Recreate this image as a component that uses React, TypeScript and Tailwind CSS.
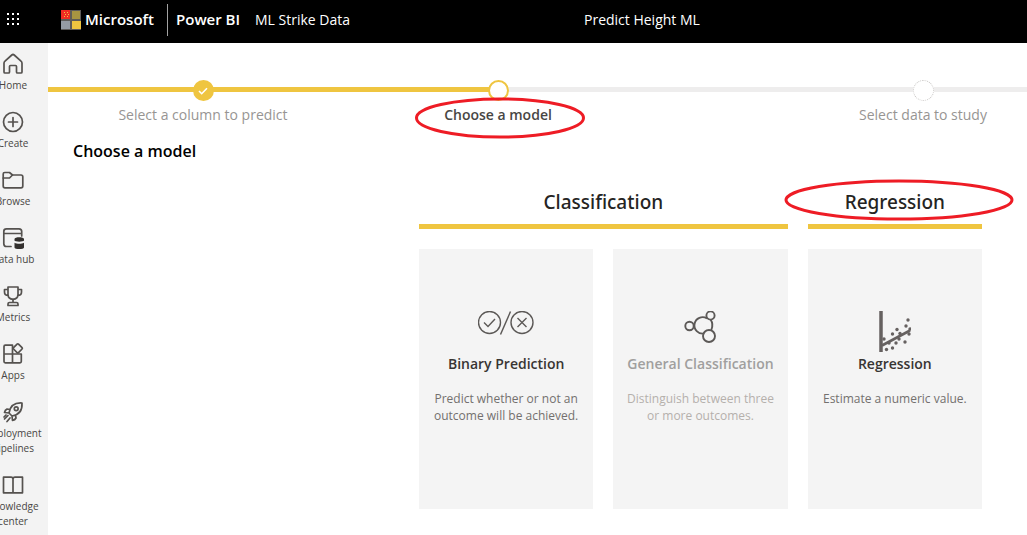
import type { ReactNode } from "react";

const stroke = { fill: "none", stroke: "#55524f", strokeWidth: 1.7, strokeLinejoin: "round", strokeLinecap: "round" } as const;

function NavIcon({ children }: { children: ReactNode }) {
  return (
    <svg viewBox="0 0 24 24" className="size-6 shrink-0" aria-hidden="true" {...stroke}>
      {children}
    </svg>
  );
}

const navItems: { label: string; icon: ReactNode }[] = [
  {
    label: "Home",
    icon: <path d="M3 11.2Q3 10 4 9.2L10.8 3Q12 2 13.2 3L20 9.2Q21 10 21 11.2V20Q21 21 20 21H16.5Q15.5 21 15.5 20V14.5Q15.5 13.5 14.5 13.5H9.500Q8.500 13.500 8.500 14.500V20Q8.500 21 7.500 21H4Q3 21 3 20Z" />,
  },
  {
    label: "Create",
    icon: (
      <>
        <circle cx="12" cy="12" r="9.500" />
        <path d="M12 7.500V16.500M7.500 12H16.500" />
      </>
    ),
  },
  {
    label: "Browse",
    icon: (
      <>
        <path d="M2.200 6Q2.200 4.500 3.700 4.500H8.500L11.500 7H20Q21.800 7 21.800 8.800V18Q21.800 19.800 20 19.800H4Q2.200 19.800 2.200 18Z" />
        <path d="M2.200 10H8.500L11.500 7" />
      </>
    ),
  },
  {
    label: "Data hub",
    icon: (
      <>
        <path d="M10 20.500H5.500Q2.800 20.500 2.800 17.800V5.500Q2.800 2.800 5.500 2.800H18Q20.700 2.800 20.700 5.500V10M3 7.500H20.500" />
        <path fill="#33302e" stroke="none" d="M13.500 13C13.500 10.700 23 10.700 23 13V14.500C23 16 13.500 16 13.500 14.500ZM13.500 16.700C16 18 20.500 18 23 16.700V21.500C23 23.500 13.500 23.500 13.500 21.500Z" />
      </>
    ),
  },
  {
    label: "Metrics",
    icon: (
      <>
        <path d="M7 3H17V10.500Q17 15 12 15.300Q7 15 7 10.500ZM7 5.500H3.500V8Q3.500 11.500 7.300 11.500M17 5.500H20.500V8Q20.500 11.500 16.700 11.500" />
        <path d="M12 15.300V18.500M7 21.500V20Q7 18.500 8.500 18.500H15.500Q17 18.500 17 20V21.500Z" />
      </>
    ),
  },
  {
    label: "Apps",
    icon: (
      <>
        <path d="M3 12V4.500Q3 3.200 4.300 3.200H11.500V12ZM3 12V19.500Q3 20.800 4.300 20.800H11.500V12ZM11.500 12H20.300V19.500Q20.300 20.800 19 20.800H11.500Z" />
        <rect x="13.300" y="2.800" width="7" height="7" rx="1" transform="rotate(45 16.800 6.300)" />
      </>
    ),
  },
  {
    label: "Deployment pipelines",
    icon: (
      <>
        <path d="M8 13C9 7 13 2.500 21 3C21.500 11 17 15 11 16ZM8.800 9.500L6 9Q4 10 3.500 12.500L8 13L11 16L11.500 20.500Q14 20 15 18L14.500 15.200" />
        <circle cx="15.200" cy="8.800" r="1.900" />
        <path d="M7 15.500L3.500 19M9 18L6 21.500M5 15L3 17" />
      </>
    ),
  },
  {
    label: "Knowledge center",
    icon: <path d="M2.500 4.200H10Q12 4.200 12 6Q12 4.200 14 4.200H21.500V19.800H2.500ZM12 6V19.500" />,
  },
];

function BinaryIcon() {
  return (
    <svg viewBox="0 13 56 48" className="h-12 w-14" aria-hidden="true" fill="none" stroke="#5c5957" strokeWidth="1.4">
      <circle cx="11.500" cy="24.500" r="11" />
      <path d="M6 24.500L10 28.500L17 21" />
      <path d="M22.500 36.500L32.500 13.500" />
      <circle cx="44" cy="24.500" r="11" />
      <path d="M39.500 20L48.500 29M48.500 20L39.500 29" />
    </svg>
  );
}

function ClusterIcon() {
  return (
    <svg viewBox="0 13 32 48" className="h-12 w-8" aria-hidden="true" fill="none" stroke="#5c5957" strokeWidth="1.900">
      <circle cx="5.500" cy="28" r="4.200" />
      <path d="M23 20.500A8.200 8.200 0 1 0 20 35.500M26.500 21.500Q29.800 26 27.300 32" />
      <circle cx="26.500" cy="17.500" r="4.100" />
      <circle cx="25" cy="38" r="6" />
    </svg>
  );
}

const points = [
  [29, 9], [27, 15], [31, 18], [18, 18.500], [13.500, 23], [5, 28], [30, 23], [26, 31],
  [17, 32], [13.500, 37], [7.500, 38.500], [10, 32], [21, 22.500], [20, 28],
];

function ScatterIcon() {
  return (
    <svg viewBox="0 0 32 48" className="h-12 w-8" aria-hidden="true">
      <path d="M2 0V41" stroke="#666160" strokeWidth="3.500" />
      <path d="M3 34.500L31 19.500" stroke="#666160" strokeWidth="2.600" />
      {points.map(([x, y]) => (
        <circle key={`${x}-${y}`} cx={x} cy={y} r="1.700" fill="#666160" />
      ))}
    </svg>
  );
}

function Highlight({ className }: { className: string }) {
  return (
    <svg
      className={`pointer-events-none absolute top-1/2 left-1/2 -translate-x-1/2 -translate-y-1/2 overflow-visible ${className}`}
      aria-hidden="true"
    >
      <ellipse cx="50%" cy="50%" rx="50%" ry="50%" fill="none" stroke="#ee1c25" strokeWidth="3" />
    </svg>
  );
}

function ModelCard({ title, text, icon, muted = false }: { title: string; text: string; icon: ReactNode; muted?: boolean }) {
  return (
    <button type="button" className="flex h-[260px] flex-col items-center bg-[#f4f4f4] pt-[62px] text-center">
      {icon}
      <span className={`-mt-[5px] text-sm leading-5 font-semibold whitespace-nowrap ${muted ? "text-[#a09f9e]" : "text-[#383533]"}`}>
        {title}
      </span>
      <span className={`mt-4 max-w-40 text-xs leading-[17px] ${muted ? "text-[#b5b0ac]" : "text-[#73706e]"}`}>{text}</span>
    </button>
  );
}

function GroupTitle({ children, className = "", marked = false }: { children: ReactNode; className?: string; marked?: boolean }) {
  return (
    <h2 className={`flex justify-center border-b-[5px] border-[#efc540] pb-2 font-['Noto_Sans','Open_Sans',sans-serif] text-[19px] leading-7 font-medium text-[#252423] ${className}`}>
      <span className="relative">
        {children}
        {marked && <Highlight className="-mt-[2px] ml-1 h-[38px] w-[226px]" />}
      </span>
    </h2>
  );
}

export default function App() {
  return (
    <div className="flex h-screen flex-col overflow-hidden bg-white font-['Open_Sans','Noto_Sans',sans-serif]">
      <header className="flex h-[43px] shrink-0 items-center bg-black pb-1 text-white">
        <button type="button" aria-label="App launcher" className="ml-[7px]">
          <svg viewBox="0 0 13 13" className="size-[13px]" fill="#fff" aria-hidden="true">
            {[0, 5, 10].map((y) => [0, 5, 10].map((x) => <rect key={`${x}-${y}`} x={x} y={y} width="2" height="2" />))}
          </svg>
        </button>
        <svg viewBox="0 0 20 20" className="ml-[41px] size-5" aria-hidden="true">
          <path fill="#5e5b58" d="M0 0H20V20H0Z" />
          <path fill="#ef2b24" d="M0 0H9V9H0Z" />
          <path fill="#a79441" d="M11 1H19V9H11Z" />
          <path fill="#efc540" d="M3 2H4V3H3ZM6 2H7V3H6ZM4 4H5V5H4ZM7 4H8V5H7ZM3 6H4V7H3ZM6 6H7V7H6Z" />
          <path fill="#959ba3" d="M0 11H9V19H0Z" />
          <path fill="#efc540" d="M11 11H20V19H11Z" />
        </svg>
        <span className="ml-1 w-[70px] text-[15px] font-semibold">Microsoft</span>
        <span className="ml-3 h-8 w-px bg-[#a3a3a3]" />
        <span className="ml-2 w-[70px] text-[15px] font-semibold whitespace-nowrap">Power BI</span>
        <a href="#workspace" className="ml-[9px] w-[110px] text-sm whitespace-nowrap">ML Strike Data</a>
        <span className="ml-[219px] text-sm whitespace-nowrap">Predict Height ML</span>
      </header>

      <div className="flex min-h-0 flex-1">
        <nav className="w-12 shrink-0 overflow-hidden bg-[#f3f3f3]" aria-label="Main">
          <ul className="-ml-[22px] w-[70px]">
            {navItems.map(({ label, icon }) => (
              <li key={label}>
                <a href="#nav" className="flex flex-col items-center gap-[2px] px-1 pt-[9px] pb-2 text-center text-[10px] leading-[15px] text-[#484644]">
                  <NavIcon>{icon}</NavIcon>
                  {label}
                </a>
              </li>
            ))}
          </ul>
        </nav>

        <main className="min-w-0 flex-1">
          <div className="relative pt-[37px]">
            <div className="absolute inset-x-0 top-11 h-[5px] bg-[#eeeded]">
              <div className="h-full w-[450px] bg-[#efc540]" />
            </div>
            <ol className="relative flex text-sm leading-5">
              <li className="flex w-[310px] flex-col items-center gap-1 text-[#979593]">
                <span className="flex size-[21px] items-center justify-center rounded-full bg-[#efc540]">
                  <svg viewBox="0 0 10 8" className="h-2 w-[10px]" fill="none" stroke="#fff" strokeWidth="1.600" aria-hidden="true">
                    <path d="M1 4L3.700 6.700L9 1.200" />
                  </svg>
                </span>
                <span>Select a column to predict</span>
              </li>
              <li aria-current="step" className="flex w-[280px] flex-col items-center gap-1 font-semibold text-[#484644]">
                <span className="size-[21px] rounded-full border-2 border-[#efc540] bg-white" />
                <span className="relative">
                  Choose a model
                  <Highlight className="mt-[3px] ml-[2px] h-[38px] w-[167px]" />
                </span>
              </li>
              <li className="ml-auto flex w-52 flex-col items-center gap-1 text-[#979593]">
                <span className="size-[21px] rounded-full border border-dotted border-[#c8c6c4] bg-white" />
                <span>Select data to study</span>
              </li>
            </ol>
          </div>

          <h1 className="mt-[14px] ml-[25px] text-base leading-6 font-semibold text-black">Choose a model</h1>

          <div className="mt-[25px] mr-[45px] ml-[371px] grid grid-cols-3 gap-5">
            <GroupTitle className="col-span-2">Classification</GroupTitle>
            <GroupTitle marked>Regression</GroupTitle>
            <ModelCard title="Binary Prediction" text="Predict whether or not an outcome will be achieved." icon={<BinaryIcon />} />
            <ModelCard title="General Classification" text="Distinguish between three or more outcomes." icon={<ClusterIcon />} muted />
            <ModelCard title="Regression" text="Estimate a numeric value." icon={<ScatterIcon />} />
          </div>
        </main>
      </div>
    </div>
  );
}
